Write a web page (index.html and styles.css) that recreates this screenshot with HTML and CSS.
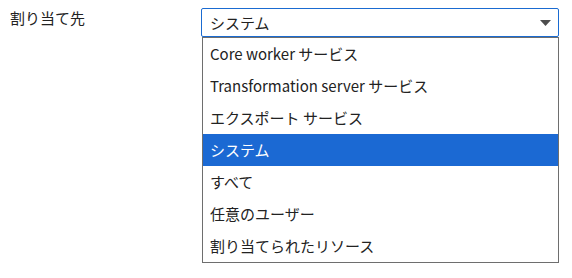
FILE: index.html
```html
<!DOCTYPE html>
<html lang="ja">
<head>
    <meta charset="UTF-8">
    <title>割り当て先</title>
    <link rel="stylesheet" href="styles.css">
</head>
<body>
    <div class="field">
        <label class="field-label">割り当て先</label>
        <div class="picker">
            <div class="select">
                <span class="select-value">システム</span>
                <svg class="caret" width="11" height="6" viewBox="0 0 11 6"><path d="M0 0h11L5.5 6z" fill="#4d4d4d"/></svg>
            </div>
            <ul class="options">
                <li>Core worker サービス</li>
                <li>Transformation server サービス</li>
                <li>エクスポート サービス</li>
                <li class="active">システム</li>
                <li>すべて</li>
                <li>任意のユーザー</li>
                <li>割り当てられたリソース</li>
            </ul>
        </div>
    </div>
</body>
</html>
```

FILE: styles.css
```css
body,ul,li{
    margin: 0;
    padding: 0;
    list-style: none;
}
body{
    font-family: "Noto Sans CJK JP", "Noto Sans", sans-serif;
    font-size: 15px;
    color: #222;
    background: #fff;
}
.field{
    display: flex;
    padding-top: 8px;
}
.field-label{
    width: 191px;
    padding-left: 10px;
    line-height: 20px;
}
.picker{
    width: 358px;
}
.select{
    display: flex;
    align-items: center;
    justify-content: space-between;
    height: 27px;
    padding: 0 7px 0 8px;
    border: 1px solid #1a6bd1;
    border-radius: 2px;
}
.select-value{
    line-height: 27px;
}
.caret{
    margin-top: 1px;
}
.options{
    margin-left: 1px;
    border: 1px solid #6e6e6e;
}
.options li{
    height: 32px;
    line-height: 32px;
    padding-left: 7px;
    white-space: nowrap;
}
.options li.active{
    background: #1b69d3;
    color: #fff;
}
```
